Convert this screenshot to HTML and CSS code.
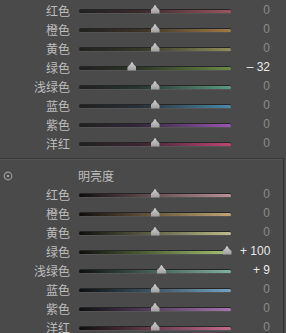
FILE: index.html
```
<!DOCTYPE html>
<html lang="zh-CN">
<head>
    <meta charset="UTF-8">
    <title>HSL</title>
    <link rel="stylesheet" href="styles.css">
</head>
<body>
<div class="panel">
    <div class="group sat">
        <div class="row"><span class="label">红色</span><div class="track red"><i class="thumb" style="--p: .5"></i></div><span class="value">0</span></div>
        <div class="row"><span class="label">橙色</span><div class="track orange"><i class="thumb" style="--p: .5"></i></div><span class="value">0</span></div>
        <div class="row"><span class="label">黄色</span><div class="track yellow"><i class="thumb" style="--p: .5"></i></div><span class="value">0</span></div>
        <div class="row"><span class="label">绿色</span><div class="track green"><i class="thumb" style="--p: .34"></i></div><span class="value on">– 32</span></div>
        <div class="row"><span class="label">浅绿色</span><div class="track aqua"><i class="thumb" style="--p: .5"></i></div><span class="value">0</span></div>
        <div class="row"><span class="label">蓝色</span><div class="track blue"><i class="thumb" style="--p: .5"></i></div><span class="value">0</span></div>
        <div class="row"><span class="label">紫色</span><div class="track purple"><i class="thumb" style="--p: .5"></i></div><span class="value">0</span></div>
        <div class="row"><span class="label">洋红</span><div class="track magenta"><i class="thumb" style="--p: .5"></i></div><span class="value">0</span></div>
    </div>

    <div class="group lum">
        <div class="row head">
            <span class="target">
                <svg width="10" height="10" viewBox="0 0 10 10"><circle cx="5" cy="5" r="3.8" fill="none" stroke="#9a9a9a" stroke-width="1.2"/><circle cx="5" cy="5" r="1.3" fill="#9a9a9a"/></svg>
            </span>
            <span class="title">明亮度</span>
        </div>
        <div class="row"><span class="label">红色</span><div class="track red"><i class="thumb" style="--p: .5"></i></div><span class="value">0</span></div>
        <div class="row"><span class="label">橙色</span><div class="track orange"><i class="thumb" style="--p: .5"></i></div><span class="value">0</span></div>
        <div class="row"><span class="label">黄色</span><div class="track yellow"><i class="thumb" style="--p: .5"></i></div><span class="value">0</span></div>
        <div class="row"><span class="label">绿色</span><div class="track green"><i class="thumb" style="--p: 1"></i></div><span class="value on">+ 100</span></div>
        <div class="row"><span class="label">浅绿色</span><div class="track aqua"><i class="thumb" style="--p: .545"></i></div><span class="value on">+ 9</span></div>
        <div class="row"><span class="label">蓝色</span><div class="track blue"><i class="thumb" style="--p: .5"></i></div><span class="value">0</span></div>
        <div class="row"><span class="label">紫色</span><div class="track purple"><i class="thumb" style="--p: .5"></i></div><span class="value">0</span></div>
        <div class="row"><span class="label">洋红</span><div class="track magenta"><i class="thumb" style="--p: .5"></i></div><span class="value">0</span></div>
    </div>
</div>
</body>
</html>
```

FILE: styles.css
```
/* dark slider panel */
body { margin: 0; background: #4a4a4a; font-family: "Noto Sans CJK SC", "Liberation Sans", sans-serif; font-size: 12px; color: #bdbdbd; overflow: hidden; }
.panel { width: 286px; height: 333px; }
.group { padding-top: 1px; }
.lum { margin-top: 5px; padding-top: 7px; border-top: 1px solid #3a3a3a; box-shadow: inset 0 1px 0 #545454; border-right: 1px solid #333; width: 283px; }
.row { display: grid; grid-template-columns: 70px 152px 1fr; column-gap: 9px; align-items: center; height: 19px; }
.label { text-align: right; line-height: 19px; white-space: nowrap; }
.value { text-align: right; padding-right: 16px; color: #8a8a8a; font-family: "Liberation Sans", "Noto Sans CJK SC", sans-serif; font-size: 12px; line-height: 19px; white-space: nowrap; }
.lum .value { padding-right: 13px; }
.value.on { color: #e8e8e8; }
.head .target { display: flex; align-items: center; padding-left: 3px; height: 19px; }
.head .title { line-height: 19px; margin-left: -1px; }

.track { position: relative; height: 3px; margin-top: 1px; border-radius: 2px; box-shadow: 0 -1px 0 #262626, 0 1px 0 rgba(255,255,255,0.06); }
.thumb { position: absolute; top: -5px; left: calc(4px + var(--p) * (100% - 8px)); width: 9px; height: 9px; margin-left: -4.5px; background: linear-gradient(#d0d0d0, #9c9c9c); clip-path: polygon(50% 0, 72% 35%, 100% 62%, 100% 100%, 0 100%, 0 62%, 28% 35%); }

.sat .red { background: linear-gradient(to right, #202020, #3a2a2c 40%, #9a5560); }
.sat .orange { background: linear-gradient(to right, #202020, #3a3226 40%, #a07a45); }
.sat .yellow { background: linear-gradient(to right, #202020, #36362a 40%, #8e8e5a); }
.sat .green { background: linear-gradient(to right, #202020, #2e3626 40%, #6a8a45); }
.sat .aqua { background: linear-gradient(to right, #202020, #28352f 40%, #5a9a80); }
.sat .blue { background: linear-gradient(to right, #202020, #283038 40%, #4a88a8); }
.sat .purple { background: linear-gradient(to right, #202020, #33283a 40%, #9a55b0); }
.sat .magenta { background: linear-gradient(to right, #202020, #3a2632 40%, #c04575); }

.lum .red { background: linear-gradient(to right, #0e0e0e, #5a4448 40%, #b89098); }
.lum .orange { background: linear-gradient(to right, #0e0e0e, #5a4c36 40%, #c0a475); }
.lum .yellow { background: linear-gradient(to right, #0e0e0e, #54543e 40%, #bcbc8c); }
.lum .green { background: linear-gradient(to right, #0e0e0e, #4a5a34 40%, #a8c470); }
.lum .aqua { background: linear-gradient(to right, #0e0e0e, #3c544a 40%, #80b0a0); }
.lum .blue { background: linear-gradient(to right, #0e0e0e, #344a58 40%, #74a2c2); }
.lum .purple { background: linear-gradient(to right, #0e0e0e, #4a3852 40%, #a674b0); }
.lum .magenta { background: linear-gradient(to right, #0e0e0e, #5a3444 40%, #c46a8c); }
```
